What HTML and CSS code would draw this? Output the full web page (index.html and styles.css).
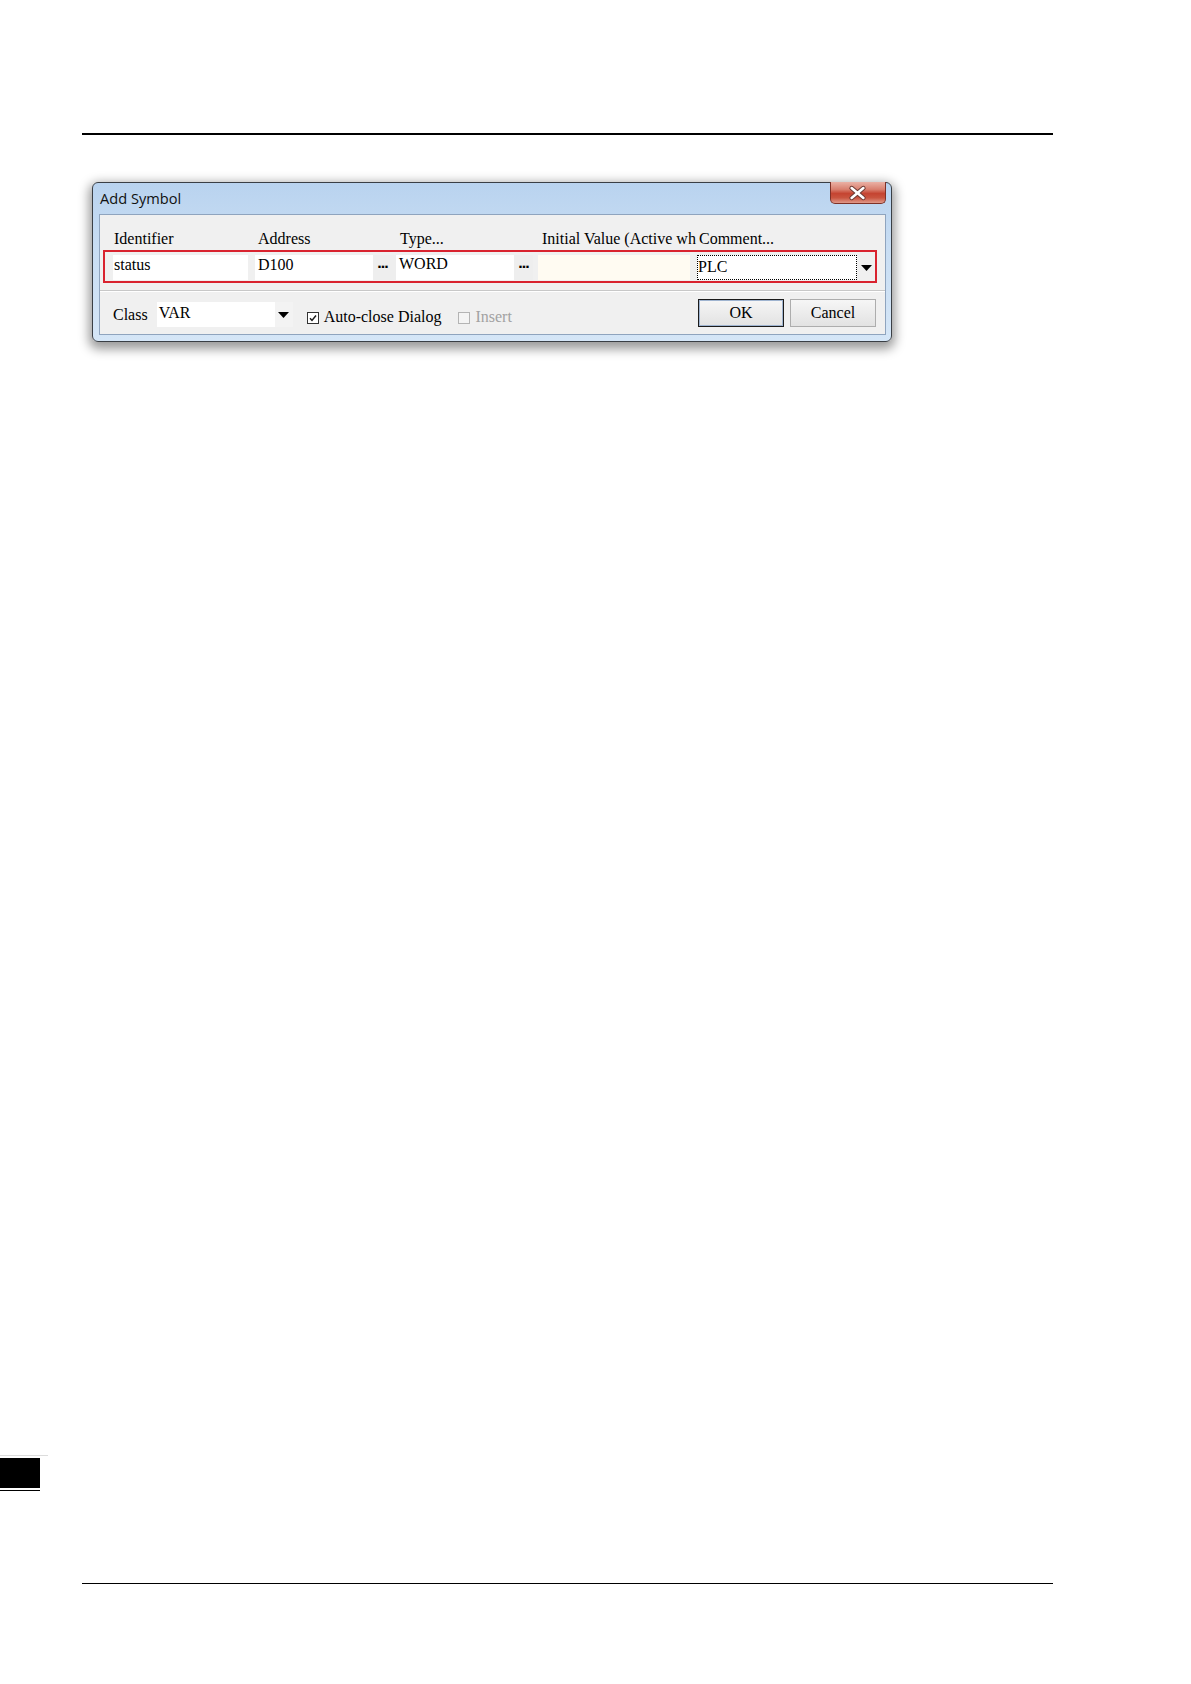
FILE: index.html
```html
<!DOCTYPE html>
<html>
<head>
<meta charset="utf-8">
<title>Add Symbol</title>
<link rel="stylesheet" href="styles.css">
</head>
<body>
<div class="page">
  <div class="rule rule-top"></div>

  <div class="dialog">
    <div class="titlebar">
      <span class="title">Add Symbol</span>
      <span class="close">
        <svg width="56" height="22" viewBox="0 0 56 22">
          <path d="M22 6 L34 16 M34 6 L22 16" stroke="#6b3a33" stroke-width="4.6" stroke-linecap="round"/>
          <path d="M22 6 L34 16 M34 6 L22 16" stroke="#ffffff" stroke-width="2.6" stroke-linecap="round"/>
        </svg>
      </span>
    </div>

    <div class="panel">
      <div class="table">
        <div class="grid head">
          <span class="h h-ident">Identifier</span>
          <span class="h h-addr">Address</span>
          <span class="h h-type">Type...</span>
          <span class="h h-init">Initial Value (Active wh</span>
          <span class="h h-comm">Comment...</span>
        </div>
        <div class="grid row">
          <span class="pad"></span>
          <span class="cell cell-ident">status</span>
          <span class="gap"></span>
          <span class="cell cell-addr">D100</span>
          <span class="dots">...</span>
          <span class="cell cell-type">WORD</span>
          <span class="dots">...</span>
          <span class="gap"></span>
          <span class="cell cell-init"></span>
          <span class="gap"></span>
          <span class="cell cell-comm">PLC</span>
          <span class="arrow">
            <svg width="11" height="6" viewBox="0 0 11 6"><polygon points="0,0 11,0 5.5,6" fill="#000"/></svg>
          </span>
        </div>
      </div>

      <div class="sep"></div>

      <div class="bottom">
        <span class="lbl lbl-class">Class</span>
        <span class="combo">
          <span class="combo-text">VAR</span>
          <span class="combo-btn">
            <svg width="11" height="6" viewBox="0 0 11 6"><polygon points="0,0 11,0 5.5,6" fill="#000"/></svg>
          </span>
        </span>
        <span class="check check-on">
          <svg width="12" height="12" viewBox="0 0 12 12">
            <rect x="0.5" y="0.5" width="11" height="11" fill="#fff" stroke="#333"/>
            <path d="M3 6.2 L5 8.4 L9 3.6" fill="none" stroke="#1a1a1a" stroke-width="1.5"/>
          </svg>
        </span>
        <span class="lbl lbl-check">Auto-close Dialog</span>
        <span class="check check-off">
          <svg width="12" height="12" viewBox="0 0 12 12">
            <rect x="0.5" y="0.5" width="11" height="11" fill="#f4f4f4" stroke="#b4b4b4"/>
          </svg>
        </span>
        <span class="lbl lbl-disabled">Insert</span>
        <span class="btn btn-ok">OK</span>
        <span class="btn btn-cancel">Cancel</span>
      </div>
    </div>
  </div>

  <div class="marker">
    <div class="marker-top"></div>
    <div class="marker-box"></div>
    <div class="marker-line"></div>
  </div>

  <div class="rule rule-bottom"></div>
</div>
</body>
</html>
```

FILE: styles.css
```css
html, body {
  margin: 0;
  padding: 0;
  background: #ffffff;
}

.page {
  padding-top: 133px;
  font-family: "Liberation Serif", "Times New Roman", serif;
  color: #000;
}

.rule {
  background: #000;
}

.rule-top {
  margin-left: 82px;
  width: 971px;
  height: 2px;
}

.rule-bottom {
  margin-left: 82px;
  width: 971px;
  height: 1px;
  margin-top: 92px;
}

/* Dialog window */
.dialog {
  margin-top: 47px;
  margin-left: 92px;
  width: 800px;
  height: 160px;
  box-sizing: border-box;
  border: 1px solid #3a3f45;
  border-radius: 6px;
  background: linear-gradient(180deg, #b9d3ef 0%, #c8ddf3 40%, #d5e6f7 100%);
  box-shadow: 0 4px 11px 3px rgba(0, 0, 0, 0.4);
  display: flex;
  flex-direction: column;
}

.titlebar {
  height: 31px;
  display: flex;
  justify-content: space-between;
  align-items: flex-start;
}

.title {
  font-family: "Open Sans", "Noto Sans", sans-serif;
  font-size: 14.6px;
  line-height: 20px;
  padding-top: 5px;
  padding-left: 7px;
  color: #111;
}

.close {
  margin-top: -1px;
  margin-right: 5px;
  width: 56px;
  height: 22px;
  box-sizing: border-box;
  border: 1px solid #7e3127;
  border-top: none;
  border-radius: 0 0 5px 5px;
  background: linear-gradient(180deg, #eab1a5 0%, #d9806f 35%, #c54431 55%, #c9543f 75%, #e0998a 100%);
  display: flex;
  align-items: center;
  justify-content: center;
  overflow: hidden;
}

.close svg {
  display: block;
  margin-left: -1px;
}

/* Inner panel */
.panel {
  margin-left: 6px;
  width: 787px;
  height: 121px;
  box-sizing: border-box;
  border: 1px solid #8fa4be;
  background: #f0f0f0;
}

.table {
  margin-left: 3px;
  width: 774px;
}

.grid {
  display: grid;
  grid-template-columns: 8px 135px 7px 118px 23px 118px 19px 5px 152px 7px 160px 18px;
}

.head {
  height: 35px;
  box-sizing: border-box;
  padding: 15px 2px 2px 2px;
  font-size: 16px;
  line-height: 18px;
}

.h {
  white-space: nowrap;
  overflow: hidden;
}

.h-ident { grid-column: 2; padding-left: 1px; }
.h-addr  { grid-column: 4 / span 2; padding-left: 3px; }
.h-type  { grid-column: 6 / span 2; padding-left: 4px; }
.h-init  { grid-column: 9 / span 2; padding-left: 4px; }
.h-comm  { grid-column: 11 / span 2; padding-left: 2px; }

.row {
  height: 33px;
  box-sizing: border-box;
  border: 2px solid #d9232f;
  padding: 3px 0 1px 0;
  font-size: 16px;
  line-height: 20px;
}

.cell {
  background: #ffffff;
  height: 25px;
  white-space: nowrap;
}

.cell-ident { padding-left: 1px; }
.cell-addr { padding-left: 3px; }
.cell-type { padding-left: 3px; line-height: 18px; }
.cell-init { background: #fffbf2; }

.cell-comm {
  box-sizing: border-box;
  border: 1px dotted #000;
  padding-left: 0;
  line-height: 22px;
}

.dots {
  background: #eeeeee;
  font-family: "DejaVu Sans", sans-serif;
  font-size: 13px;
  font-weight: bold;
  line-height: 18px;
  padding-left: 4px;
  letter-spacing: -1.5px;
}

.arrow {
  display: flex;
  align-items: center;
  justify-content: center;
}

.arrow svg,
.combo-btn svg {
  display: block;
}

.sep {
  margin-top: 7px;
  height: 0;
  border-top: 1px solid #c8c8c8;
  border-bottom: 1px solid #ffffff;
}

/* Bottom controls */
.bottom {
  height: 42px;
  display: flex;
  align-items: flex-start;
  font-size: 16px;
  line-height: 20px;
}

.lbl {
  white-space: nowrap;
}

.lbl-class {
  margin-left: 13px;
  margin-top: 13px;
}

.combo {
  margin-left: 9px;
  margin-top: 10px;
  width: 136px;
  height: 25px;
  display: flex;
}

.combo-text {
  flex: 1;
  background: #ffffff;
  padding-left: 2px;
  padding-top: 1px;
}

.combo-btn {
  width: 18px;
  background: #f3f3f3;
  display: flex;
  align-items: center;
  justify-content: center;
}

.check {
  margin-top: 20px;
  width: 12px;
  height: 12px;
}

.check svg {
  display: block;
}

.check-on {
  margin-left: 14px;
}

.lbl-check {
  margin-left: 5px;
  margin-top: 15px;
}

.check-off {
  margin-left: 17px;
}

.lbl-disabled {
  margin-left: 5px;
  margin-top: 15px;
  color: #a2a2a2;
}

.btn {
  margin-top: 7px;
  width: 86px;
  height: 28px;
  box-sizing: border-box;
  text-align: center;
  line-height: 26px;
  background: linear-gradient(180deg, #f6f6f6 0%, #ececec 50%, #e2e2e2 100%);
}

.btn-ok {
  margin-left: auto;
  border: 1px solid #1b1b1b;
  box-shadow: inset 0 0 0 1px #9fb4d0;
}

.btn-cancel {
  margin-left: 6px;
  margin-right: 9px;
  border: 1px solid #adadad;
}

/* Page marker at left edge */
.marker {
  margin-top: 1113px;
}

.marker-top {
  width: 48px;
  height: 1px;
  background: #dcdcdc;
}

.marker-box {
  margin-top: 2px;
  width: 40px;
  height: 30px;
  background: #000;
}

.marker-line {
  margin-top: 2px;
  width: 40px;
  height: 1px;
  background: #000;
}
```
